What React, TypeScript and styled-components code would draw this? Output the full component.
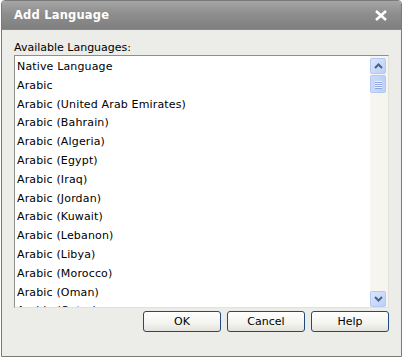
import styled, { createGlobalStyle } from 'styled-components';

const languages = [
  'Native Language',
  'Arabic',
  'Arabic (United Arab Emirates)',
  'Arabic (Bahrain)',
  'Arabic (Algeria)',
  'Arabic (Egypt)',
  'Arabic (Iraq)',
  'Arabic (Jordan)',
  'Arabic (Kuwait)',
  'Arabic (Lebanon)',
  'Arabic (Libya)',
  'Arabic (Morocco)',
  'Arabic (Oman)',
  'Arabic (Qatar)',
  'Arabic (Saudi Arabia)',
];

const GlobalStyle = createGlobalStyle`
  body {
    margin: 0;
    background: #ffffff;
    font-family: 'DejaVu Sans', Verdana, sans-serif;
  }
`;

const App = () => {
  return (
    <>
      <GlobalStyle />
      <Dialog>
        <TitleBar>
          <Title>Add Language</Title>
          <CloseIcon width="14" height="11" viewBox="0 0 14 11">
            <path d="M2 1 L12 10 M12 1 L2 10" stroke="#fff" strokeWidth="2.6" />
          </CloseIcon>
        </TitleBar>
        <Body>
          <Label>Available Languages:</Label>
          <ListBox>
            <Items>
              {languages.map((lang) => (
                <Item key={lang}>{lang}</Item>
              ))}
            </Items>
            <ScrollBar>
              <ScrollBtn>
                <svg width="9" height="6" viewBox="0 0 9 6">
                  <path d="M1 5 L4.5 1.5 L8 5" stroke="#4d6185" strokeWidth="2" fill="none" />
                </svg>
              </ScrollBtn>
              <Thumb>
                <Grip />
                <Grip />
                <Grip />
                <Grip />
              </Thumb>
              <Track />
              <ScrollBtn>
                <svg width="9" height="6" viewBox="0 0 9 6">
                  <path d="M1 1 L4.5 4.5 L8 1" stroke="#4d6185" strokeWidth="2" fill="none" />
                </svg>
              </ScrollBtn>
            </ScrollBar>
          </ListBox>
          <ButtonRow>
            <Button>OK</Button>
            <Button>Cancel</Button>
            <Button>Help</Button>
          </ButtonRow>
        </Body>
      </Dialog>
    </>
  );
};

const Dialog = styled.div`
  width: 399px;
  height: 355px;
  margin-left: 1px;
  border: 1px solid #7a7a7a;
  border-radius: 4px 4px 0 0;
  background: #ecece8;
  display: flex;
  flex-direction: column;
  overflow: hidden;
`;
const TitleBar = styled.div`
  height: 28px;
  display: flex;
  align-items: center;
  justify-content: space-between;
  padding: 0 13px 0 12px;
  background: linear-gradient(#a6a6a6, #8e8e8e 45%, #7f7f7f);
  border-bottom: 1px solid #8a8a8a;
`;
const Title = styled.span`
  color: #ffffff;
  font-size: 11.5px;
  font-weight: bold;
  letter-spacing: 0.2px;
`;
const CloseIcon = styled.svg`
  display: block;
`;
const Body = styled.div`
  flex: 1;
  padding: 11px 12px 0 12px;
  display: flex;
  flex-direction: column;
`;
const Label = styled.div`
  font-size: 11px;
  line-height: 14px;
  color: #000;
`;
const ListBox = styled.div`
  height: 251px;
  border: 1px solid;
  border-color: #8e8e8a #e2e1da #e2e1da #8e8e8a;
  background: #ffffff;
  display: flex;
  overflow: hidden;
`;
const Items = styled.div`
  flex: 1;
  padding: 2px 0 0 2px;
  overflow: hidden;
`;
const Item = styled.div`
  height: 18.8px;
  line-height: 18.8px;
  font-size: 11px;
  letter-spacing: 0.15px;
  color: #000;
  white-space: nowrap;
`;
const ScrollBar = styled.div`
  width: 17px;
  padding: 2px 1px 0 0;
  background: #f6f5ef;
  display: flex;
  flex-direction: column;
  align-items: flex-start;
`;
const ScrollBtn = styled.div`
  width: 14px;
  height: 14px;
  border: 1px solid #b4c8f6;
  border-radius: 2px;
  background: linear-gradient(135deg, #dbe6fd, #bccff9);
  display: flex;
  align-items: center;
  justify-content: center;
`;
const Thumb = styled.div`
  width: 14px;
  height: 16px;
  margin-top: 1px;
  border: 1px solid #b4c8f6;
  border-radius: 2px;
  background: linear-gradient(90deg, #cbdafc, #bdd0fa);
  display: flex;
  flex-direction: column;
  align-items: center;
  justify-content: center;
  gap: 1px;
`;
const Grip = styled.div`
  width: 7px;
  height: 1px;
  background: #eef3ff;
  box-shadow: 0 1px 0 #8ca5dc;
`;
const Track = styled.div`
  flex: 1;
`;
const ButtonRow = styled.div`
  display: flex;
  justify-content: flex-end;
  gap: 6px;
  margin-top: 3px;
`;
const Button = styled.button`
  width: 78px;
  height: 21px;
  padding: 0;
  border: 1px solid #1f4a7d;
  border-radius: 3px;
  background: linear-gradient(#ffffff, #f3f3ef 60%, #e3e2dc);
  font-family: 'DejaVu Sans', Verdana, sans-serif;
  font-size: 11px;
  color: #000;
`;

export default App;
